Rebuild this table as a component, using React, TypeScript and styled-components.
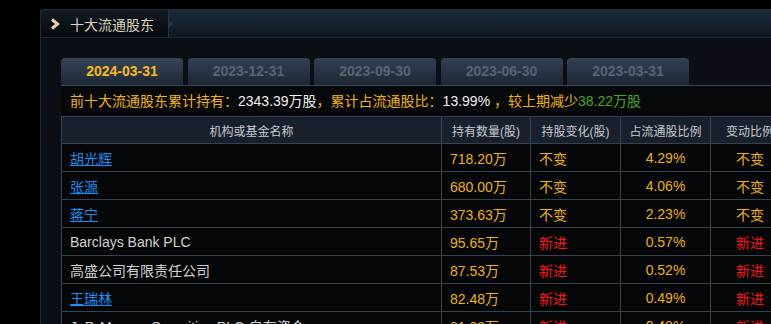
import { FC } from 'react';
import styled, { createGlobalStyle } from 'styled-components';

const GlobalStyle = createGlobalStyle`
	html, body {
		margin: 0;
		padding: 0;
		background: #000;
		overflow: hidden;
	}
	body {
		font-family: "Liberation Sans", "Noto Sans CJK SC", sans-serif;
	}
`;

type Tone = 'gold' | 'red';

interface IHolder {
	name: string;
	link?: boolean;
	amount: string;
	change: string;
	ratio: string;
	delta: string;
	tone: Tone;
}

const holders: IHolder[] = [
	{ name: '胡光辉', link: true, amount: '718.20万', change: '不变', ratio: '4.29%', delta: '不变', tone: 'gold' },
	{ name: '张源', link: true, amount: '680.00万', change: '不变', ratio: '4.06%', delta: '不变', tone: 'gold' },
	{ name: '蒋宁', link: true, amount: '373.63万', change: '不变', ratio: '2.23%', delta: '不变', tone: 'gold' },
	{ name: 'Barclays Bank PLC', amount: '95.65万', change: '新进', ratio: '0.57%', delta: '新进', tone: 'red' },
	{ name: '高盛公司有限责任公司', amount: '87.53万', change: '新进', ratio: '0.52%', delta: '新进', tone: 'red' },
	{ name: '王瑞林', link: true, amount: '82.48万', change: '新进', ratio: '0.49%', delta: '新进', tone: 'red' },
	{ name: 'J. P. Morgan Securities PLC-自有资金', amount: '81.33万', change: '新进', ratio: '0.48%', delta: '新进', tone: 'red' },
];

const periods = ['2024-03-31', '2023-12-31', '2023-09-30', '2023-06-30', '2023-03-31'];

const App: FC = () => {
	return (
		<>
			<GlobalStyle />
			<Panel>
				<TitleBar>
					<TitleTab>
						<svg width="11" height="12" viewBox="0 0 11 12">
							<path d="M2 1.5 L7.5 6 L2 10.5" fill="none" stroke="#e8d3ac" strokeWidth="3" strokeLinejoin="miter" />
						</svg>
						<Title>十大流通股东</Title>
					</TitleTab>
				</TitleBar>
				<Body>
					<Tabs>
						{periods.map((p, i) => (
							<Tab key={p} active={i === 0}>{p}</Tab>
						))}
					</Tabs>
					<Summary>
						<Gold>前十大流通股东累计持有：</Gold>
						<White>2343.39万股</White>
						<Gold>，累计占流通股比：</Gold>
						<White>13.99%</White>
						<Gold> ，较上期减少</Gold>
						<Green>38.22万股</Green>
					</Summary>
					<Table>
						<colgroup>
							<col style={{ width: 380 }} />
							<col style={{ width: 89 }} />
							<col style={{ width: 90 }} />
							<col style={{ width: 90 }} />
							<col style={{ width: 79 }} />
						</colgroup>
						<thead>
							<tr>
								<Th>机构或基金名称</Th>
								<Th>持有数量(股)</Th>
								<Th>持股变化(股)</Th>
								<Th>占流通股比例</Th>
								<Th>变动比例</Th>
							</tr>
						</thead>
						<tbody>
							{holders.map((h) => (
								<tr key={h.name}>
									<NameCell>{h.link ? <NameLink href="#">{h.name}</NameLink> : h.name}</NameCell>
									<Cell align="left" tone="gold">{h.amount}</Cell>
									<Cell align="left" tone={h.tone}>{h.change}</Cell>
									<Cell align="center" tone="gold">{h.ratio}</Cell>
									<Cell align="center" tone={h.tone}>{h.delta}</Cell>
								</tr>
							))}
						</tbody>
					</Table>
				</Body>
			</Panel>
		</>
	);
};

const Panel = styled.div`
	margin: 9px 0 0 40px;
	width: 760px;
	height: 330px;
	border: 1px solid #1f2833;
	border-right: none;
	border-radius: 3px 0 0 0;
	background: #0b0e15;
	overflow: hidden;
`;

const TitleBar = styled.div`
	display: flex;
	height: 27px;
	border-bottom: 1px solid #1d2530;
	background: linear-gradient(#1b2b3c, #0f1822);
`;

const TitleTab = styled.div`
	position: relative;
	display: flex;
	align-items: center;
	gap: 9px;
	width: 128px;
	padding-left: 9px;
	box-sizing: border-box;
	background: linear-gradient(#131b25, #06090d);
	border-right: 1px solid #2a3543;

	&::after {
		content: '';
		position: absolute;
		right: -5px;
		top: 10px;
		border-left: 4px solid #2a3543;
		border-top: 4px solid transparent;
		border-bottom: 4px solid transparent;
	}
`;

const Title = styled.span`
	font-size: 14px;
	color: #ded3bf;
`;

const Body = styled.div`
	padding: 20px 0 0 20px;
`;

const Tabs = styled.div`
	display: flex;
	gap: 4.5px;
`;

const Tab = styled.div<{ active?: boolean }>`
	width: 122px;
	height: 27px;
	line-height: 27px;
	text-align: center;
	border-radius: 4px 4px 0 0;
	font-size: 14px;
	font-weight: bold;
	color: ${(p) => (p.active ? '#f6bd16' : '#5b6470')};
	background: ${(p) =>
		p.active ? 'linear-gradient(#36445a, #1e2835)' : 'linear-gradient(#334055, #1d2633)'};
`;

const Summary = styled.div`
	height: 30px;
	line-height: 30px;
	padding-left: 9px;
	border-top: 1px solid #394858;
	background: #060809;
	font-size: 14px;
	white-space: nowrap;
`;

const Gold = styled.span`
	color: #f4b400;
`;

const White = styled.span`
	color: #f2f4f6;
`;

const Green = styled.span`
	color: #44a81c;
`;

const Table = styled.table`
	border-collapse: collapse;
	table-layout: fixed;
	width: 728px;
	background: #040607;
	font-size: 14px;

	td, th {
		border: 1px solid #35424f;
		padding: 0;
		white-space: nowrap;
		overflow: hidden;
	}
`;

const Th = styled.th`
	height: 26px;
	background: #17202c;
	color: #c7cbd0;
	font-size: 12px;
	font-weight: normal;
	text-align: center;
`;

const NameCell = styled.td`
	height: 27px;
	padding-left: 8px !important;
	color: #d2d2d2;
`;

const NameLink = styled.a`
	color: #1590f5;
	text-decoration: underline;
`;

const Cell = styled.td<{ align: 'left' | 'center'; tone: Tone }>`
	text-align: ${(p) => p.align};
	padding-left: ${(p) => (p.align === 'left' ? '8px' : '0')} !important;
	color: ${(p) => (p.tone === 'gold' ? '#f2b300' : '#ff1414')};
`;

export default App;
